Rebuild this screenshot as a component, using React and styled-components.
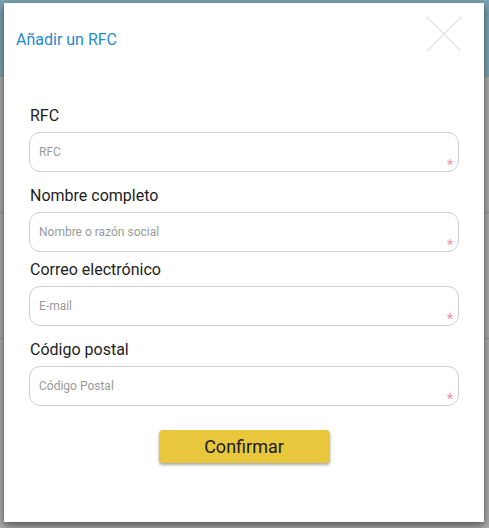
import React from "react";
import styled, { createGlobalStyle } from "styled-components";

const GlobalStyle = createGlobalStyle`
  html, body {
    margin: 0;
    padding: 0;
    font-family: Roboto, "Liberation Sans", sans-serif;
  }
`;

const Page = styled.div`
  position: relative;
  width: 489px;
  height: 528px;
  overflow: hidden;
  background: #ababab;
`;

const PageHeader = styled.div`
  height: 77px;
  background: #78a3b1;
`;

const PageStrip = styled.div`
  height: 1px;
  margin-top: ${(p) => p.top}px;
  background: ${(p) => p.color};
`;

const Modal = styled.div`
  position: absolute;
  left: 4px;
  top: 3px;
  width: 480px;
  height: 519px;
  background: #fff;
  box-shadow: 0 3px 8px rgba(0, 0, 0, 0.55);
  display: flex;
  flex-direction: column;
`;

const ModalHead = styled.div`
  position: relative;
  height: 78px;
  padding: 27px 0 0 12px;
  box-sizing: border-box;
`;

const Title = styled.h2`
  margin: 0;
  font-size: 16px;
  font-weight: 400;
  color: #1f8bcb;
`;

const Close = styled.button`
  position: absolute;
  top: 11px;
  right: 20px;
  width: 40px;
  height: 40px;
  padding: 0;
  border: 0;
  background: none;
  cursor: pointer;
`;

const Form = styled.form`
  display: flex;
  flex-direction: column;
  padding: 23px 25px 0 25px;
`;

const Field = styled.div`
  display: flex;
  flex-direction: column;
  margin-bottom: ${(p) => (p.tight ? 6 : 12)}px;
`;

const Label = styled.label`
  font-size: 16px;
  color: #1d1d1d;
  line-height: 19px;
  margin: 2px 0 7px 1px;
`;

const InputWrap = styled.div`
  position: relative;
  height: 40px;
`;

const Input = styled.input`
  width: 100%;
  height: 100%;
  box-sizing: border-box;
  border: 1px solid #cfcfcf;
  border-radius: 11px;
  padding: 0 9px;
  font-family: Roboto, "Liberation Sans", sans-serif;
  font-size: 12px;
  color: #333;
  outline: none;
  &::placeholder {
    color: #9a9a9a;
  }
`;

const Required = styled.span`
  position: absolute;
  right: 6px;
  bottom: 0;
  font-size: 14px;
  line-height: 14px;
  color: #f28ea6;
`;

const Actions = styled.div`
  display: flex;
  justify-content: center;
  margin-top: 12px;
`;

const Button = styled.button`
  width: 171px;
  height: 33px;
  border: 0;
  border-radius: 4px;
  background: #e9c73d;
  color: #1a1a1a;
  font-family: Roboto, "Liberation Sans", sans-serif;
  font-size: 18px;
  box-shadow: 0 2px 3px rgba(0, 0, 0, 0.35);
  cursor: pointer;
`;

const fields = [
  { label: "RFC", placeholder: "RFC" },
  { label: "Nombre completo", placeholder: "Nombre o razón social", tight: true },
  { label: "Correo electrónico", placeholder: "E-mail" },
  { label: "Código postal", placeholder: "Código Postal" },
];

export default function App() {
  return (
    <>
      <GlobalStyle />
      <Page>
        <PageHeader />
        <PageStrip top={135} color="#8f8f8f" />
        <PageStrip top={125} color="#8f8f8f" />
        <Modal>
          <ModalHead>
            <Title>Añadir un RFC</Title>
            <Close type="button" aria-label="Cerrar">
              <svg width="40" height="40" viewBox="0 0 40 40">
                <path d="M3 3 L37 37 M37 3 L3 37" stroke="#e3e3e3" strokeWidth="1.3" />
              </svg>
            </Close>
          </ModalHead>
          <Form>
            {fields.map((f) => (
              <Field key={f.label} tight={f.tight}>
                <Label>{f.label}</Label>
                <InputWrap>
                  <Input placeholder={f.placeholder} />
                  <Required>*</Required>
                </InputWrap>
              </Field>
            ))}
            <Actions>
              <Button type="button">Confirmar</Button>
            </Actions>
          </Form>
        </Modal>
      </Page>
    </>
  );
}
